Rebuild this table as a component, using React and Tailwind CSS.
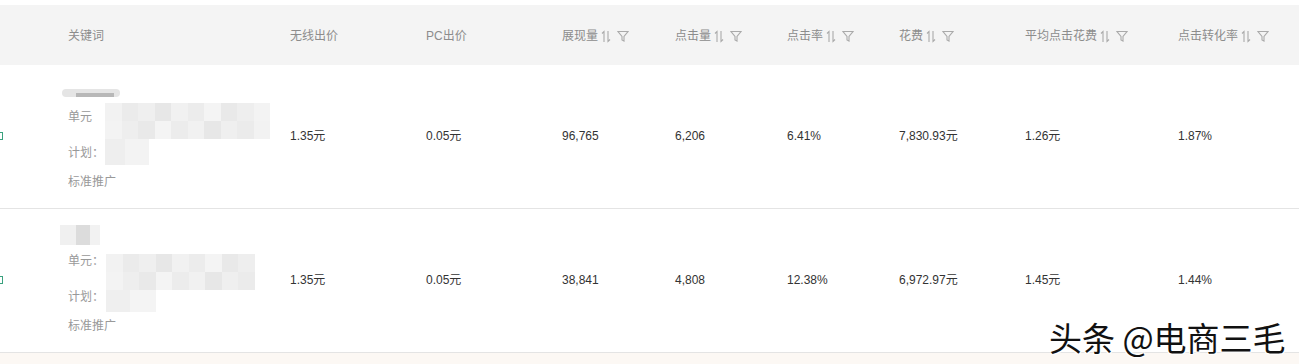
import React from 'react';

const font = { fontFamily: '"Liberation Sans", "Noto Sans CJK SC", sans-serif' };

function SortIcon() {
  return (
    <svg width="10" height="13" viewBox="0 0 10 13" className="ml-[3px] inline-block" fill="none" stroke="#aaa" strokeWidth="1.1">
      <path d="M3 12V1.5L1 3.5" />
      <path d="M7 1v10.5L9 9.5" />
    </svg>
  );
}

function FilterIcon() {
  return (
    <svg width="12" height="12" viewBox="0 0 12 12" className="ml-[6px] inline-block" fill="none" stroke="#aaa" strokeWidth="1.1">
      <path d="M1 1.5h10L7 6.5V11L5 10V6.5Z" />
    </svg>
  );
}

const cols = [
  { label: '关键词', w: 'w-[290px] pl-[68px]' },
  { label: '无线出价', w: 'w-[136px]' },
  { label: 'PC出价', w: 'w-[136px]' },
  { label: '展现量', w: 'w-[113px]', sort: true },
  { label: '点击量', w: 'w-[112px]', sort: true },
  { label: '点击率', w: 'w-[112px]', sort: true },
  { label: '花费', w: 'w-[126px]', sort: true },
  { label: '平均点击花费', w: 'w-[153px]', sort: true },
  { label: '点击转化率', w: 'w-[121px]', sort: true },
];

const rows = [
  ['1.35元', '0.05元', '96,765', '6,206', '6.41%', '7,830.93元', '1.26元', '1.87%'],
  ['1.35元', '0.05元', '38,841', '4,808', '12.38%', '6,972.97元', '1.45元', '1.44%'],
];

function Mosaic({ variant }) {
  const shades1 = ['#f2f2f2', '#ebebeb', '#efefef', '#e7e7e7', '#f1f1f1', '#ececec', '#f4f4f4', '#e9e9e9', '#eeeeee', '#f3f3f3'];
  if (variant === 0) {
    return (
      <div className="absolute left-[105px] top-[38px] flex flex-col">
        <div className="flex">
          {shades1.map((c, i) => (
            <div key={i} className="h-[18px] w-[16.5px]" style={{ background: c }} />
          ))}
        </div>
        <div className="flex">
          {shades1.slice().reverse().map((c, i) => (
            <div key={i} className="h-[18px] w-[16.5px]" style={{ background: c }} />
          ))}
        </div>
        <div className="flex">
          <div className="h-[26px] w-[20px] bg-[#eeeeee]" />
          <div className="h-[26px] w-[24px] bg-[#f3f3f3]" />
        </div>
      </div>
    );
  }
  return (
    <>
      <div className="absolute left-[60px] top-[16px] flex">
        <div className="h-[20px] w-[16px] bg-[#f0f0f0]" />
        <div className="h-[20px] w-[14px] bg-[#dcdcdc]" />
        <div className="h-[20px] w-[10px] bg-[#f2f2f2]" />
      </div>
      <div className="absolute left-[106px] top-[45px] flex flex-col">
        <div className="flex">
          {shades1.slice(0, 9).map((c, i) => (
            <div key={i} className="h-[18px] w-[16.5px]" style={{ background: c }} />
          ))}
        </div>
        <div className="flex">
          {shades1.slice(1, 10).reverse().map((c, i) => (
            <div key={i} className="h-[18px] w-[16.5px]" style={{ background: c }} />
          ))}
        </div>
        <div className="flex">
          <div className="h-[22px] w-[24px] bg-[#efefef]" />
          <div className="h-[22px] w-[26px] bg-[#f4f4f4]" />
        </div>
      </div>
    </>
  );
}

function KeywordCell({ variant }) {
  return (
    <div className="relative h-full w-[290px] pl-[68px] text-[12px] text-[#999]">
      <div className="absolute left-0 top-[67px] h-[8px] w-[3px] border border-l-0 border-[#3aa17e]" />
      {variant === 0 ? (
        <div className="absolute left-[62px] top-[24px] h-[8px] w-[58px] rounded bg-[#e5e5e5]">
          <div className="ml-[14px] mt-[4px] h-[4px] w-[38px] bg-[#b8b8b8]" />
        </div>
      ) : null}
      <div className="pt-[44px] leading-[16px]">{variant === 0 ? '单元' : '单元：'}</div>
      <div className="mt-[20px] leading-[16px]">计划：</div>
      <div className="mt-[13px] leading-[16px]">标准推广</div>
      <Mosaic variant={variant} />
    </div>
  );
}

export default function App() {
  return (
    <div className="relative h-[364px] w-[1299px] overflow-hidden bg-white" style={font}>
      <div className="h-[5px] bg-white" />
      {/* header */}
      <div className="flex h-[60px] items-center bg-[#f4f4f4] pt-[2px] text-[12px] text-[#8c8c8c]">
        {cols.map((c, i) => (
          <div key={i} className={`${c.w} flex items-center`}>
            <span>{c.label}</span>
            {c.sort ? (
              <>
                <SortIcon />
                <FilterIcon />
              </>
            ) : null}
          </div>
        ))}
      </div>
      {/* rows */}
      {rows.map((r, ri) => (
        <div key={ri} className="flex h-[144px] border-b border-[#e4e4e4] text-[12px] text-[#333]">
          <KeywordCell variant={ri} />
          {r.map((v, i) => (
            <div key={i} className={`${cols[i + 1].w} flex items-center pb-[1px]`}>
              {v}
            </div>
          ))}
        </div>
      ))}
      <div className="h-[12px] bg-[#fcf8f4]" />
      {/* watermark */}
      <div
        className="absolute left-[1049px] top-[318px] text-[33px] leading-[38px] text-[#111]"
        style={{ fontFamily: '"Noto Sans CJK SC", sans-serif', textShadow: '1px 1px 0 #fff, -1px -1px 0 #fff, 1px -1px 0 #fff, -1px 1px 0 #fff' }}
      >
        头条 @电商三毛
      </div>
    </div>
  );
}
